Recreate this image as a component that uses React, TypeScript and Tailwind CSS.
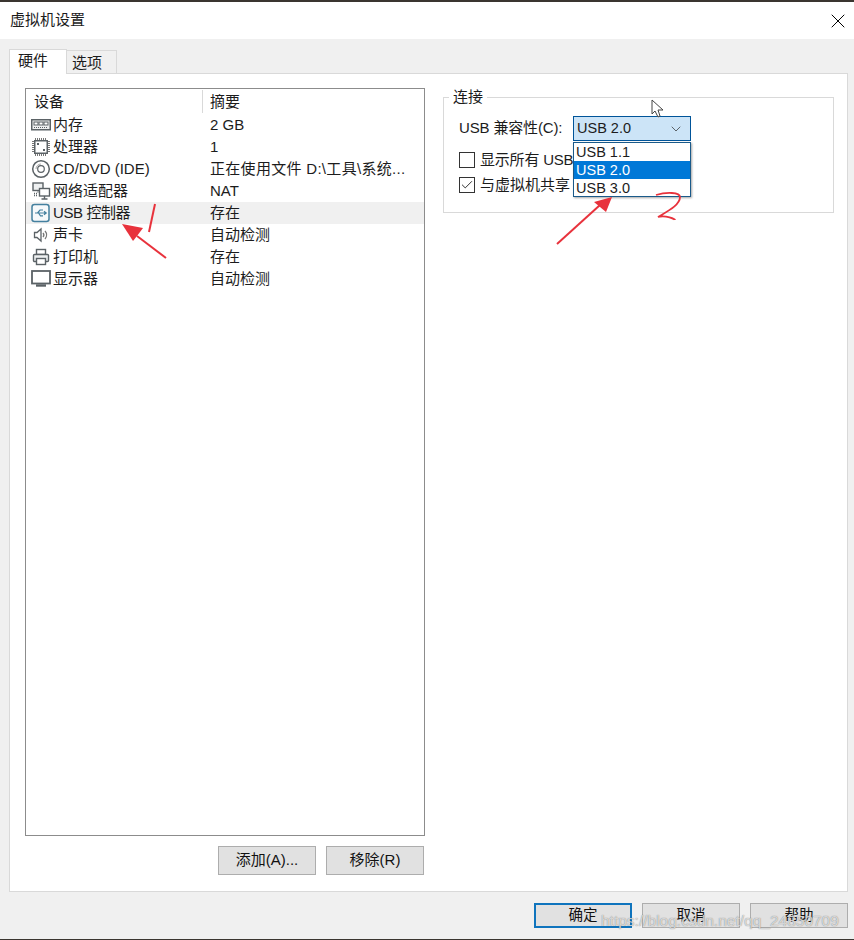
import { X, ChevronDown, Check } from "lucide-react";

const devices = [
  { name: "内存", summary: "2 GB", icon: "mem" },
  { name: "处理器", summary: "1", icon: "cpu" },
  { name: "CD/DVD (IDE)", summary: "正在使用文件 D:\\工具\\系统...", icon: "cd" },
  { name: "网络适配器", summary: "NAT", icon: "net" },
  { name: "USB 控制器", summary: "存在", icon: "usb" },
  { name: "声卡", summary: "自动检测", icon: "sound" },
  { name: "打印机", summary: "存在", icon: "print" },
  { name: "显示器", summary: "自动检测", icon: "mon" },
];

const DeviceIcon = ({ kind }: { kind: string }) => {
  const s = "#5b6266";
  return (
    <svg width="20" height="20" viewBox="0 0 20 20" fill="none" stroke={s} strokeWidth="1">
      {kind === "mem" && (
        <>
          <rect x="0.75" y="4.75" width="18.5" height="10" strokeWidth="1.5" fill="#eef0f1" />
          <rect x="3" y="7" width="4" height="3" fill="#fff" />
          <rect x="8" y="7" width="4" height="3" fill="#fff" />
          <rect x="13" y="7" width="4" height="3" fill="#fff" />
          <path d="M3 12.5h14" strokeDasharray="1 1" />
        </>
      )}
      {kind === "cpu" && (
        <>
          <rect x="3.75" y="3.75" width="12.5" height="12.5" strokeWidth="1.5" fill="#fff" />
          <path d="M4 2h12M4 18h12M2 4v12M18 4v12" strokeDasharray="1 1" strokeWidth="2" stroke="#777" />
          <path d="M6 6h2v2H6zM12 12h2v2h-2z" fill={s} stroke="none" />
        </>
      )}
      {kind === "cd" && (
        <>
          <circle cx="10" cy="10" r="8.3" strokeWidth="1.5" fill="#fff" />
          <circle cx="10" cy="10" r="3.3" strokeWidth="1.2" />
          <path d="M5 10a5 5 0 0 1 5-5" stroke="#aaa" />
        </>
      )}
      {kind === "net" && (
        <>
          <rect x="2" y="2" width="10" height="7.5" strokeWidth="1.4" fill="#eef0f1" />
          <rect x="8.5" y="7.5" width="10" height="7.5" strokeWidth="1.4" fill="#fff" />
          <path d="M13.5 15v2.5M10.5 18h6" strokeWidth="1.4" />
          <path d="M7 9.5v2.5M3 12.5h4M3 14.5h3" strokeDasharray="1 1" strokeWidth="1.4" />
        </>
      )}
      {kind === "usb" && (
        <>
          <rect x="1" y="1.5" width="17" height="17" rx="2.5" stroke="#44809f" strokeWidth="1.5" fill="#f6f9fb" />
          <path d="M4 10h11M13 8.3l2.2 1.7-2.2 1.7M6.5 10l2.5-3H12M7.5 10l2 2.8h2.5" stroke="#44809f" strokeWidth="1.2" />
        </>
      )}
      {kind === "sound" && (
        <>
          <path d="M3.5 7.5h2.5l4-3.5v12l-4-3.5H3.5z" strokeWidth="1.3" fill="#fff" />
          <path d="M12 8a3 3 0 0 1 0 4M14 6a6 6 0 0 1 0 8" stroke="#777" strokeWidth="1.3" />
        </>
      )}
      {kind === "print" && (
        <>
          <rect x="5.5" y="2.5" width="9" height="5" strokeWidth="1.4" fill="#fff" />
          <rect x="2.5" y="7.5" width="15" height="7" rx="1" strokeWidth="1.4" fill="#eef0f1" />
          <rect x="5.5" y="11.5" width="9" height="6" strokeWidth="1.4" fill="#fff" />
        </>
      )}
      {kind === "mon" && (
        <>
          <rect x="1" y="2" width="18" height="12.5" strokeWidth="1.8" fill="#fff" />
          <path d="M5 16.5h10" strokeWidth="2.4" />
        </>
      )}
    </svg>
  );
};

const DialogButton = ({ label, primary }: { label: string; primary?: boolean }) => (
  <button
    className={`w-[98px] h-[25px] bg-[#e1e1e1] text-[14.5px] text-[#111] flex items-center justify-center ${
      primary ? "border-2 border-[#0f74bd]" : "border border-[#adadad]"
    }`}
  >
    {label}
  </button>
);

const DevicesButton = ({ label }: { label: string }) => (
  <button className="w-[98px] h-[29px] bg-[#e1e1e1] border border-[#adadad] text-[15px] text-[#111] flex items-center justify-center">
    {label}
  </button>
);

export default function App() {
  return (
    <div
      className="relative w-[854px] h-[940px] overflow-hidden flex flex-col bg-[#f0f0f0] text-[#1c1c1c]"
      style={{ fontFamily: '"Liberation Sans", "Noto Sans CJK SC", sans-serif' }}
    >
      <div className="h-[2px] bg-[#3a3530]" />

      {/* title bar */}
      <div className="h-[37px] bg-white flex items-center justify-between pl-[10px] pr-[4px] text-[15px]">
        <span>虚拟机设置</span>
        <X size={24} strokeWidth={1} className="text-black" />
      </div>

      <div className="flex-1 flex flex-col pl-[9px] pr-[6px]">
        {/* tabs */}
        <div className="flex items-end h-[34px] text-[15px] pt-[9px]">
          <div className="h-[25px] w-[58px] bg-white border border-b-0 border-[#d9d9d9] pl-[8px] leading-[21px] relative top-[1px] z-10">
            硬件
          </div>
          <div className="h-[23px] w-[50px] bg-[#f0f0f0] border border-b-0 border-l-0 border-[#d9d9d9] pl-[5px] leading-[23px]">
            选项
          </div>
        </div>

        {/* main panel */}
        <div className="h-[819px] bg-white border border-[#d9d9d9] flex pl-[15px] pr-[13px] pt-[14px]">
          <div className="w-[400px] flex flex-col">
            <div className="h-[748px] border border-[#8c8c8c] flex flex-col text-[15px]">
              <div className="h-[25px] flex items-center">
                <div className="w-[177px] pl-[8px] pt-[2px] h-[23px] flex items-center border-r border-[#d9d9d9]">设备</div>
                <div className="pl-[7px] pt-[2px]">摘要</div>
              </div>
              {devices.map((d) => (
                <div
                  key={d.name}
                  className={`h-[22px] flex items-center ${d.icon === "usb" ? "bg-[#f0f0f0]" : ""}`}
                >
                  <div className="w-[178px] pl-[5px] flex items-center gap-[2px]">
                    <DeviceIcon kind={d.icon} />
                    <span className={d.icon === "usb" ? "tracking-[-0.4px]" : ""}>{d.name}</span>
                  </div>
                  <div className={`pl-[6px] whitespace-nowrap ${d.icon === "cd" ? "tracking-[0.3px]" : ""}`}>
                    {d.summary}
                  </div>
                </div>
              ))}
            </div>
            <div className="flex justify-end gap-[10px] mt-[10px] pr-[1px]">
              <DevicesButton label="添加(A)..." />
              <DevicesButton label="移除(R)" />
            </div>
          </div>

          {/* connection group */}
          <div className="ml-[18px] flex-1 mt-[9px] h-[116px] border border-[#d9d9d9] relative">
            <span className="absolute left-[5px] top-[-10px] bg-white px-[4px] text-[15px] leading-[18px]">连接</span>
            <div className="flex items-center h-[25px] mt-[18px] ml-[15px] text-[15px]">
              <span className="w-[114px] whitespace-nowrap tracking-[-0.15px]">USB 兼容性(C):</span>
              <div className="w-[118px] h-[25px] bg-[#cce4f7] border border-[#005499] flex items-center justify-between pl-[3px] pr-[6px] text-[14.5px]">
                <span>USB 2.0</span>
                <ChevronDown size={16} strokeWidth={1.1} className="text-[#333]" />
              </div>
            </div>
            <div className="flex items-center ml-[15px] mt-[11px] h-[16px] text-[15px] gap-[5px]">
              <span className="w-[16px] h-[16px] border border-[#333] bg-white" />
              <span className="w-[92px] whitespace-nowrap tracking-[-0.2px]">显示所有 USB</span>
            </div>
            <div className="flex items-center ml-[15px] mt-[9px] h-[16px] text-[15px] gap-[5px]">
              <span className="w-[16px] h-[16px] border border-[#333] bg-white flex items-center justify-center">
                <Check size={14} strokeWidth={1.6} className="text-[#222]" />
              </span>
              <span className="w-[90px] whitespace-nowrap">与虚拟机共享</span>
            </div>
            {/* open dropdown */}
            <div className="absolute left-[129px] top-[44px] w-[118px] h-[55px] bg-white border border-[#1a5a8a] text-[14.5px] shadow-[1px_1px_2px_rgba(0,0,0,0.35)]">
              <div className="h-[18px] leading-[18px] pl-[2px]">USB 1.1</div>
              <div className="h-[18px] leading-[18px] pl-[2px] bg-[#0078d7] text-white">USB 2.0</div>
              <div className="h-[18px] leading-[18px] pl-[2px]">USB 3.0</div>
            </div>
          </div>
        </div>

        {/* footer */}
        <div className="flex-1 flex items-start justify-end gap-[10px] pt-[11px]">
          <DialogButton label="确定" primary />
          <DialogButton label="取消" />
          <DialogButton label="帮助" />
        </div>
      </div>

      <div className="h-[1px] bg-[#3a3530]" />

      {/* hand drawn marks and the cursor on top of the screenshot */}
      <svg className="absolute left-0 top-0 pointer-events-none" width="854" height="940" fill="none">
        <path d="M155 204L149 232" stroke="#e8323c" strokeWidth="2" />
        <path d="M166 258L137 236" stroke="#e8323c" strokeWidth="2" />
        <path d="M122 224L143 228L137 236L133 241Z" fill="#e8323c" />
        <path d="M557 244L600 205" stroke="#e8323c" strokeWidth="2" />
        <path d="M612 197L606 212L600 207L594 202Z" fill="#e8323c" />
        <path d="M656 195C666 192 680 192 680 197C680 205 668 211 658 217C666 215 675 219 675 220" stroke="#e8323c" strokeWidth="1.8" />
        <path d="M652 100V114L655 111L658 117L660 116L658 110H663Z" fill="#fff" stroke="#444" strokeWidth="1" />
      </svg>

      <div className="absolute left-[601px] top-[911px] text-[15.5px] text-white/70 leading-[20px] whitespace-nowrap [text-shadow:0_0_1px_rgba(90,90,90,0.9)]">
        https://blog.csdn.net/qq_24850709
      </div>
    </div>
  );
}
